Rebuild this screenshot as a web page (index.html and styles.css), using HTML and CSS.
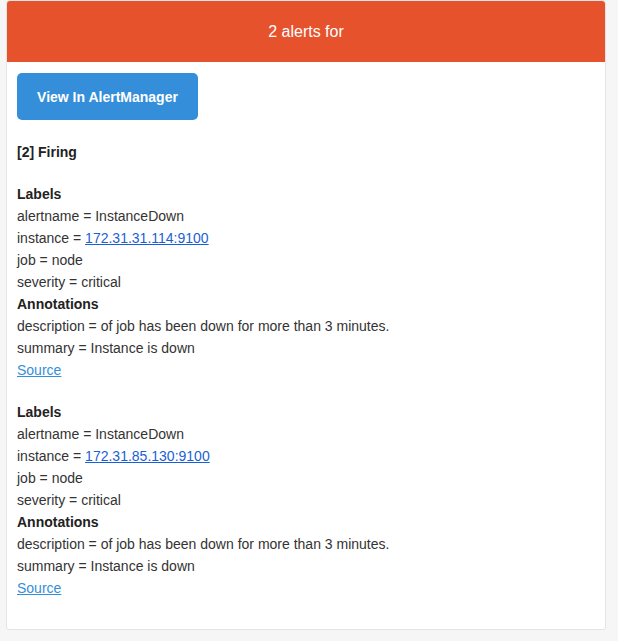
FILE: index.html
```html
<!DOCTYPE html>
<html>
<head>
<meta charset="utf-8">
<link rel="stylesheet" href="styles.css">
</head>
<body>
<div class="card">
  <div class="alert">2 alerts for</div>
  <div class="content">
    <a class="btn" href="#">View In AlertManager</a>
    <div class="firing"><strong>[2] Firing</strong></div>
    <div class="group">
      <strong>Labels</strong><br>
      alertname = InstanceDown<br>
      instance = <a class="auto" href="#">172.31.31.114:9100</a><br>
      job = node<br>
      severity = critical<br>
      <strong>Annotations</strong><br>
      description = of job has been down for more than 3 minutes.<br>
      summary = Instance is down<br>
      <a class="src" href="#">Source</a>
    </div>
    <div class="group">
      <strong>Labels</strong><br>
      alertname = InstanceDown<br>
      instance = <a class="auto" href="#">172.31.85.130:9100</a><br>
      job = node<br>
      severity = critical<br>
      <strong>Annotations</strong><br>
      description = of job has been down for more than 3 minutes.<br>
      summary = Instance is down<br>
      <a class="src" href="#">Source</a>
    </div>
  </div>
</div>
</body>
</html>
```
FILE: styles.css
```css
html, body {
  margin: 0;
  padding: 0;
  background: #f6f6f6;
}
body {
  font-family: "Liberation Sans", Arial, Helvetica, sans-serif;
  font-size: 14px;
  color: #333;
  padding: 0 12px 0 6px;
}
.card {
  width: 598px;
  background: #fff;
  border: 1px solid #e4e4e4;
  border-radius: 3px;
}
.alert {
  background: #e6522c;
  color: #fff;
  font-size: 16px;
  text-align: center;
  height: 61px;
  line-height: 61px;
  border-radius: 3px 3px 0 0;
}
.content {
  padding: 11px 10px 30px 10px;
}
.btn {
  display: inline-block;
  background: #348eda;
  color: #fff;
  font-weight: bold;
  text-decoration: none;
  width: 181px;
  height: 47px;
  line-height: 49px;
  text-align: center;
  border-radius: 5px;
}
.firing {
  margin-top: 21px;
  line-height: 22px;
}
.group {
  margin-top: 20px;
  line-height: 22px;
}
.group + .group {
  margin-top: 20px;
}
strong {
  color: #222;
}
.auto {
  color: #1a5fd6;
}
.src {
  color: #348eda;
}
```
